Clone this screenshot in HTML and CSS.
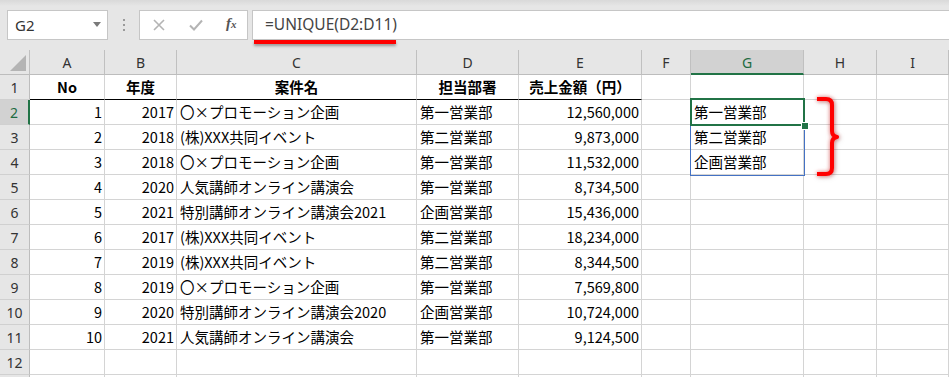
FILE: index.html
```html
<!DOCTYPE html>
<html lang="ja">
<head>
<meta charset="utf-8">
<title>UNIQUE</title>
<link rel="stylesheet" href="styles.css">
</head>
<body>
<div class="app">
  <div class="toolbar">
    <div class="namebox">
      <span class="ref">G2</span>
      <svg class="dd" width="8" height="5" viewBox="0 0 8 5"><path d="M0 0H8L4 5Z" fill="#7a7a7a"/></svg>
    </div>
    <div class="grip"><i></i><i></i><i></i></div>
    <div class="btns">
      <svg class="ico x" width="12" height="12" viewBox="0 0 12 12"><path d="M1 1L11 11M11 1L1 11" stroke="#b4b4b4" stroke-width="1.6" fill="none"/></svg>
      <svg class="ico ok" width="14" height="12" viewBox="0 0 14 12"><path d="M1 6.5L5 10.5L13 1.5" stroke="#b4b4b4" stroke-width="2" fill="none"/></svg>
      <span class="fx">f<span class="fxx">x</span></span>
    </div>
    <div class="formula">=UNIQUE(D2:D11)</div>
    <div class="mark"></div>
  </div>

  <div class="sheet">
    <div class="row hdr">
      <div class="corner"><svg width="18" height="18" viewBox="0 0 18 18"><path d="M17 1V17H1Z" fill="#b4b4b4"/></svg></div>
      <div class="ch">A</div><div class="ch">B</div><div class="ch">C</div><div class="ch">D</div><div class="ch">E</div><div class="ch">F</div><div class="ch sel">G</div><div class="ch">H</div><div class="ch">I</div>
    </div>
    <div class="row">
      <div class="rh">1</div>
      <div class="c h bb">No</div><div class="c h bb">年度</div><div class="c h bb">案件名</div><div class="c h bb">担当部署</div><div class="c h bb">売上金額（円）</div><div class="c"></div><div class="c"></div><div class="c"></div><div class="c"></div>
    </div>
    <div class="row">
      <div class="rh rsel">2</div>
      <div class="c n">1</div><div class="c n">2017</div><div class="c t">〇×プロモーション企画</div><div class="c t">第一営業部</div><div class="c n">12,560,000</div><div class="c"></div><div class="c t">第一営業部</div><div class="c"></div><div class="c"></div>
    </div>
    <div class="row">
      <div class="rh">3</div>
      <div class="c n">2</div><div class="c n">2018</div><div class="c t">(株)XXX共同イベント</div><div class="c t">第二営業部</div><div class="c n">9,873,000</div><div class="c"></div><div class="c t">第二営業部</div><div class="c"></div><div class="c"></div>
    </div>
    <div class="row">
      <div class="rh">4</div>
      <div class="c n">3</div><div class="c n">2018</div><div class="c t">〇×プロモーション企画</div><div class="c t">第一営業部</div><div class="c n">11,532,000</div><div class="c"></div><div class="c t">企画営業部</div><div class="c"></div><div class="c"></div>
    </div>
    <div class="row">
      <div class="rh">5</div>
      <div class="c n">4</div><div class="c n">2020</div><div class="c t">人気講師オンライン講演会</div><div class="c t">第一営業部</div><div class="c n">8,734,500</div><div class="c"></div><div class="c"></div><div class="c"></div><div class="c"></div>
    </div>
    <div class="row">
      <div class="rh">6</div>
      <div class="c n">5</div><div class="c n">2021</div><div class="c t">特別講師オンライン講演会2021</div><div class="c t">企画営業部</div><div class="c n">15,436,000</div><div class="c"></div><div class="c"></div><div class="c"></div><div class="c"></div>
    </div>
    <div class="row">
      <div class="rh">7</div>
      <div class="c n">6</div><div class="c n">2017</div><div class="c t">(株)XXX共同イベント</div><div class="c t">第二営業部</div><div class="c n">18,234,000</div><div class="c"></div><div class="c"></div><div class="c"></div><div class="c"></div>
    </div>
    <div class="row">
      <div class="rh">8</div>
      <div class="c n">7</div><div class="c n">2019</div><div class="c t">(株)XXX共同イベント</div><div class="c t">第二営業部</div><div class="c n">8,344,500</div><div class="c"></div><div class="c"></div><div class="c"></div><div class="c"></div>
    </div>
    <div class="row">
      <div class="rh">9</div>
      <div class="c n">8</div><div class="c n">2019</div><div class="c t">〇×プロモーション企画</div><div class="c t">第一営業部</div><div class="c n">7,569,800</div><div class="c"></div><div class="c"></div><div class="c"></div><div class="c"></div>
    </div>
    <div class="row">
      <div class="rh">10</div>
      <div class="c n">9</div><div class="c n">2020</div><div class="c t">特別講師オンライン講演会2020</div><div class="c t">企画営業部</div><div class="c n">10,724,000</div><div class="c"></div><div class="c"></div><div class="c"></div><div class="c"></div>
    </div>
    <div class="row">
      <div class="rh">11</div>
      <div class="c n">10</div><div class="c n">2021</div><div class="c t">人気講師オンライン講演会</div><div class="c t">第一営業部</div><div class="c n">9,124,500</div><div class="c"></div><div class="c"></div><div class="c"></div><div class="c"></div>
    </div>
    <div class="row">
      <div class="rh">12</div>
      <div class="c"></div><div class="c"></div><div class="c"></div><div class="c"></div><div class="c"></div><div class="c"></div><div class="c"></div><div class="c"></div><div class="c"></div>
    </div>
    <div class="row">
      <div class="rh"></div>
      <div class="c"></div><div class="c"></div><div class="c"></div><div class="c"></div><div class="c"></div><div class="c"></div><div class="c"></div><div class="c"></div><div class="c"></div>
    </div>

    <div class="spill"></div>
    <div class="active"></div>
    <div class="handle"></div>
    <svg class="brace" width="30" height="90" viewBox="810 92 30 90">
      <path d="M817 99H826Q832 99 832 105V131Q832 136 837 137Q832 138 832 143V168Q832 174 826 174H817" fill="none" stroke="#ff0000" stroke-width="4" stroke-linejoin="round"/>
    </svg>
  </div>
</div>
</body>
</html>
```

FILE: styles.css
```css
html, body {
  margin: 0;
  padding: 0;
  background: #ffffff;
  overflow: hidden;
}

.app {
  width: 949px;
  height: 377px;
  overflow: hidden;
  font-family: "Noto Sans CJK JP", "Noto Sans", sans-serif;
  color: #000;
}

/* ---------- formula toolbar ---------- */
.toolbar {
  position: relative;
  height: 50px;
  box-sizing: border-box;
  padding-top: 10px;
  background: linear-gradient(#d9d9d9 0, #e6e6e6 6px, #e6e6e6 100%);
  display: flex;
  align-items: flex-start;
}

.namebox {
  margin-left: 7px;
  width: 101px;
  height: 30px;
  box-sizing: border-box;
  background: #fff;
  border: 1px solid #c6c6c6;
  display: flex;
  align-items: center;
  justify-content: space-between;
  padding: 0 6px 0 7px;
}

.ref {
  font-family: "Noto Sans", sans-serif;
  font-size: 15px;
  color: #333;
}

.dd {
  margin-top: -2px;
}

.grip {
  width: 31px;
  height: 30px;
  display: flex;
  flex-direction: column;
  align-items: center;
  justify-content: center;
  gap: 3px;
}

.grip i {
  display: block;
  width: 2px;
  height: 2px;
  background: #9a9a9a;
}

.btns {
  width: 109px;
  height: 30px;
  box-sizing: border-box;
  background: #fff;
  border: 1px solid #c6c6c6;
  display: flex;
  align-items: center;
  padding-left: 13px;
}

.btns .ok {
  margin-left: 24px;
}

.fx {
  font-family: "Liberation Serif", serif;
  font-style: italic;
  font-weight: bold;
  font-size: 15px;
  color: #555;
  margin-left: 23px;
  margin-top: -3px;
}

.fxx {
  font-size: 11px;
}

.formula {
  flex: 1;
  margin-left: 4px;
  height: 30px;
  box-sizing: border-box;
  background: #fff;
  border: 1px solid #c6c6c6;
  border-right: none;
  padding-left: 12px;
  font-family: "Noto Sans", sans-serif;
  font-size: 15.5px;
  line-height: 27px;
  color: #444;
}

.mark {
  position: absolute;
  left: 254px;
  top: 40px;
  width: 142px;
  height: 4px;
  background: #ff0000;
  box-shadow: 0 2px 3px rgba(0, 0, 0, 0.35);
}

/* ---------- sheet ---------- */
.sheet {
  position: relative;
}

.row {
  display: grid;
  grid-template-columns: 30px 75px 72px 240px 102px 123px 49px 113px 73px 72px;
  height: 25px;
}

.row > div {
  box-sizing: border-box;
  height: 25px;
  border-right: 1px solid #d4d4d4;
  border-bottom: 1px solid #d4d4d4;
  white-space: nowrap;
  overflow: visible;
}

.hdr > div {
  background: #e6e6e6;
  border-right: 1px solid #c0c0c0;
  border-bottom: 1px solid #bdbdbd;
}

.hdr .ch {
  font-family: "Noto Sans", sans-serif;
  font-size: 14px;
  color: #333;
  text-align: center;
  line-height: 25px;
}

.hdr .sel {
  background: #d2d2d2;
  color: #1e6b41;
  border-bottom: 2px solid #217346;
}

.corner {
  display: flex;
  align-items: flex-end;
  justify-content: flex-end;
  padding: 0 2px 2px 0;
}

.row .rh {
  background: #e6e6e6;
  border-right: 1px solid #bdbdbd;
  border-bottom: 1px solid #d0d0d0;
  font-family: "Noto Sans", sans-serif;
  font-size: 14px;
  color: #333;
  text-align: center;
  line-height: 25px;
}

.row .rsel {
  background: #d2d2d2;
  color: #1e6b41;
  border-right: 2px solid #217346;
}

.c {
  font-size: 14.5px;
  line-height: 24px;
}

.n {
  text-align: right;
  padding-right: 2px;
}

.t {
  text-align: left;
  padding-left: 3px;
}

.h {
  text-align: center;
  font-weight: bold;
}

.row .bb {
  border-bottom: 1px solid #000;
}

/* ---------- overlays ---------- */
.spill {
  position: absolute;
  left: 690px;
  top: 49px;
  width: 115px;
  height: 77px;
  box-sizing: border-box;
  border: 1px solid #4472c4;
}

.active {
  position: absolute;
  left: 690px;
  top: 48px;
  width: 115px;
  height: 28px;
  box-sizing: border-box;
  border: 2px solid #217346;
}

.handle {
  position: absolute;
  left: 801px;
  top: 72px;
  width: 6px;
  height: 6px;
  background: #217346;
  border: 1px solid #fff;
}

.brace {
  position: absolute;
  left: 810px;
  top: 42px;
  overflow: visible;
  filter: drop-shadow(0 0 2px rgba(255, 0, 0, 0.45)) drop-shadow(1px 1px 2px rgba(0, 0, 0, 0.25));
}
```
